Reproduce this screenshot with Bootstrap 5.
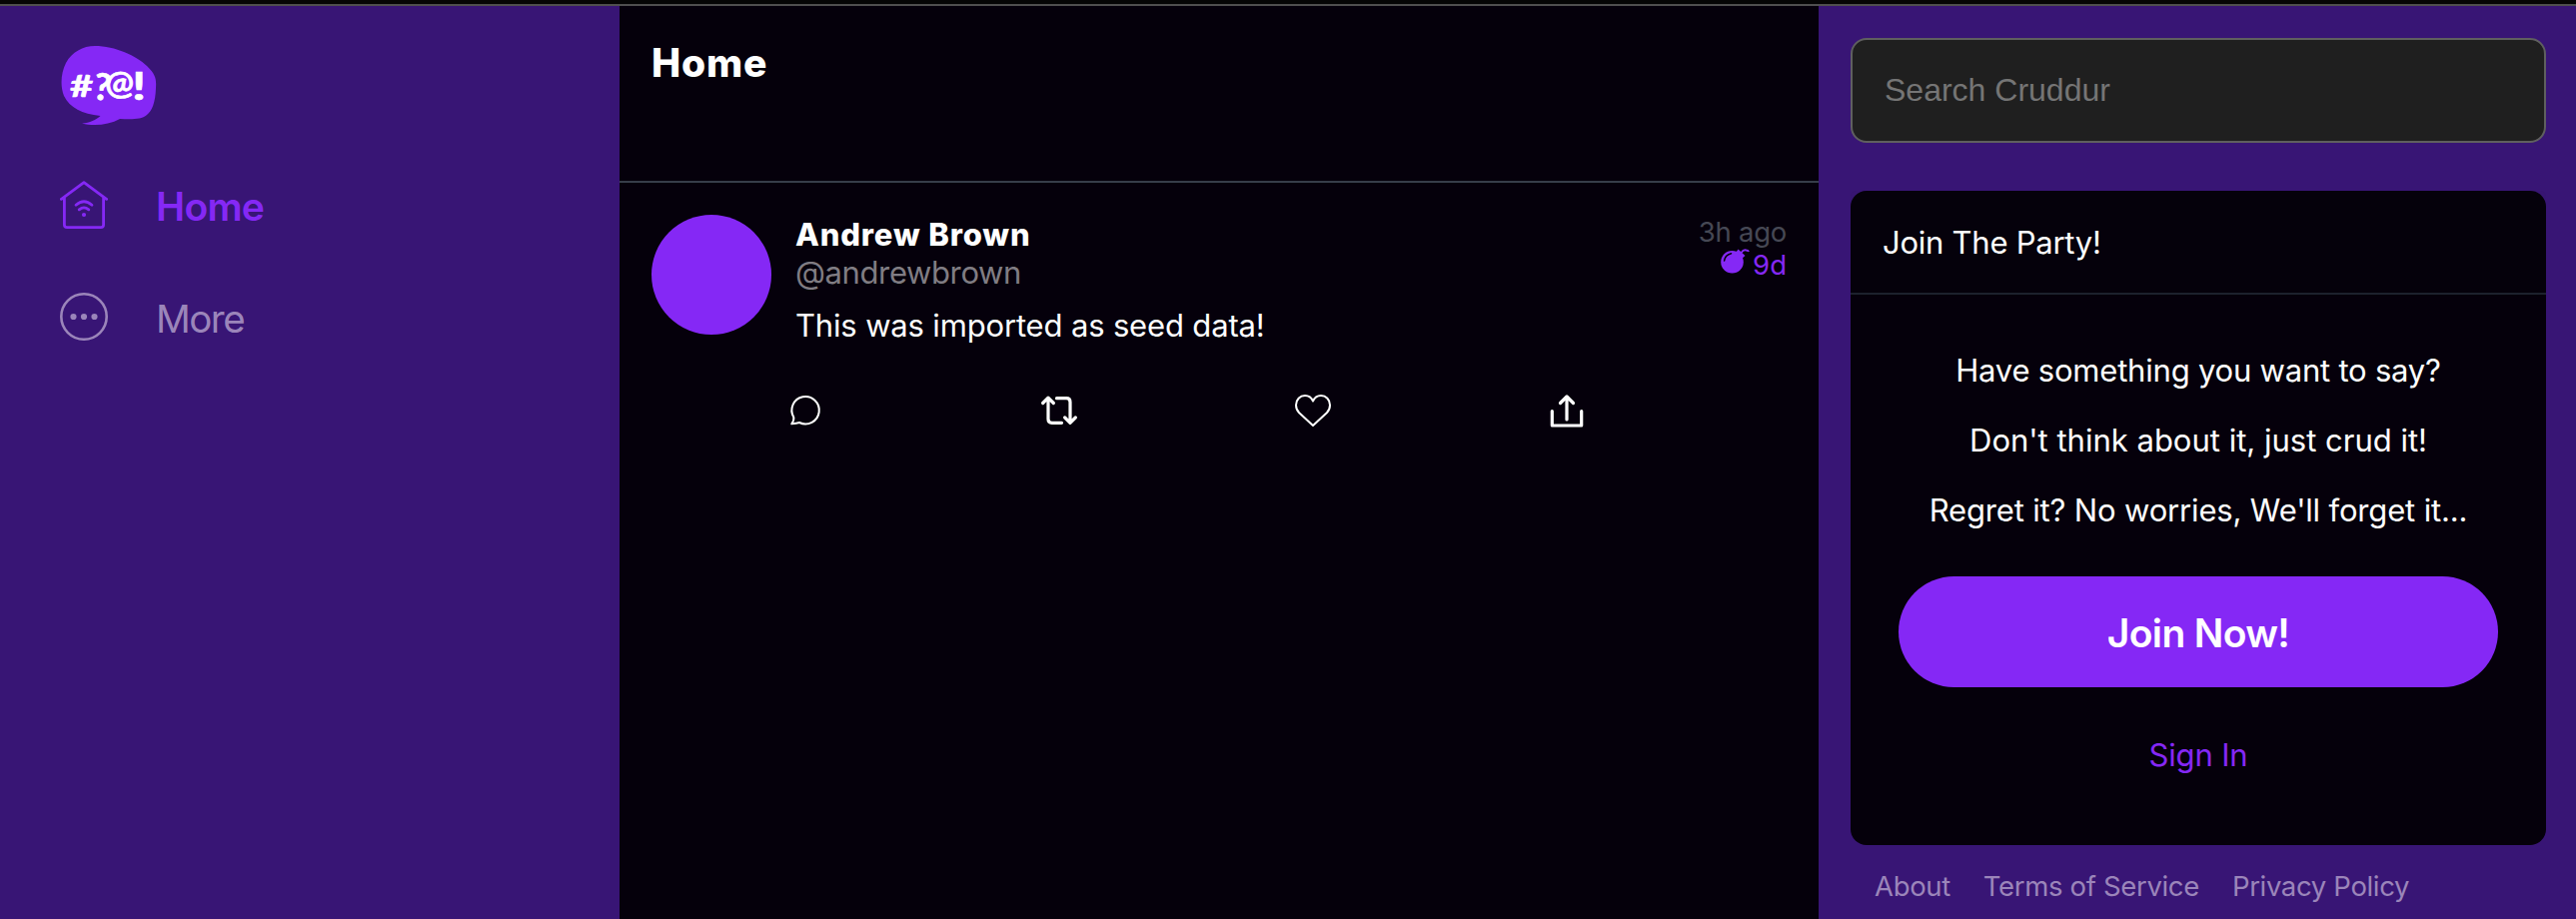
<!DOCTYPE html>
<html lang="en">
<head>
<meta charset="utf-8">
<meta name="viewport" content="width=device-width, initial-scale=1">
<title>Cruddur - Home</title>
<link href="https://cdn.jsdelivr.net/npm/bootstrap@5.3.0/dist/css/bootstrap.min.css" rel="stylesheet">
<style>
:root { --accent: #8528f5; --panel: #381575; --ink: #05000b; --muted: #9b85ba; }
body { background: var(--panel); color: #fff; font-family: Inter, sans-serif; font-size: 31px; line-height: 40px; letter-spacing: -.16px; }
a { color: inherit; text-decoration: none; }
svg { display: block; flex: none; }
.topbar { height: 6px; background: #050505; border-bottom: 2px solid #4f4f4f; }
.sidebar { width: 620px; padding: 40px 60px; }
.brand { width: 96px; height: 80px; margin: 0 0 31px 1px; }
.side-nav { gap: 16px; }
.side-nav .nav-link { height: 96px; padding: 0; gap: 48px; font-size: 38.5px; color: var(--muted); letter-spacing: -1.5px; }
.side-nav .nav-link span { padding-top: 3px; }
.side-nav .nav-link.active { color: var(--accent); font-size: 39px; font-weight: 600; letter-spacing: -.7px; }
.feed { width: 1200px; background: var(--ink); }
.feed-head { height: 177px; padding: 32px; border-bottom: 2px solid #363d49; }
.feed-head h1 { font-size: 39px; line-height: 50px; font-weight: 800; letter-spacing: .8px; margin: 0; }
.post { padding: 32px; }
.avatar { width: 120px; height: 120px; background: var(--accent); flex: none; }
.who { line-height: 38px; padding-top: 1px; }
.who strong { font-weight: 800; letter-spacing: .85px; }
.handle { color: #807d83; letter-spacing: -.38px; }
.when { font-size: 27.5px; line-height: 33px; color: #464854; padding-top: 1px; letter-spacing: -.26px; }
.expires { color: var(--accent); gap: 3px; letter-spacing: 0; }
.message { line-height: 44px; padding-top: 12px; }
.actions { gap: 218px; padding: 45px 0 0 136px; }
.aside-col { padding: 32px 30px 0 32px; }
.search-box { height: 105px; padding: 0 32px; border: 2px solid #5f5f5f; border-radius: 16px; background: #1f1f1f !important; font: 32px "Liberation Sans", sans-serif; letter-spacing: 0; color: #fff; }
.search-box::placeholder { color: #757575; opacity: 1; }
.join { margin-top: 48px; background: var(--ink); border: 0; border-radius: 16px; color: #fff; height: 655px; }
.join .card-header { height: 104px; padding: 32px; border-bottom: 2px solid #1c212d; letter-spacing: -.25px; }
.join .card-body { padding: 56px 48px 0; }
.join p { line-height: 40px; margin: 0 0 30px; }
.join .ask { letter-spacing: -.21px; }
.join .just { letter-spacing: 0; }
.btn-join { height: 111px; margin-top: 46px; padding-top: 2px; background: var(--accent); color: #fff; font-size: 39px; font-weight: 600; letter-spacing: -.65px; }
.sign-in { color: var(--accent); margin-top: 48px; }
.legal { gap: 33px; padding: 21px 24px 0; font-size: 27.5px; letter-spacing: -.34px; color: var(--muted); }
</style>
</head>
<body class="vh-100 overflow-hidden d-flex flex-column">
<div class="topbar flex-shrink-0"></div>
<div class="d-flex flex-grow-1">
  <nav class="sidebar flex-shrink-0">
    <a href="#" class="brand d-block">
      <svg width="96" height="80" viewBox="0 0 96 80">
        <path fill="#8528f5" d="M34 0C54 0 76 10 86 20C95 29 95.500 33 95 42C94.500 57 91 65 86 69C80 74 70 73.500 59 73C48 79 33 80.500 21 77.500C29 77 35 74 39.500 70C21 68 9 62 3 50C-1 40 0 27 5 17C11 6 22 0 34 0Z"/>
        <g fill="#fff" stroke="#fff" stroke-width=".6" font-family="Lato" font-weight="700">
          <text x="9" y="50.500" font-size="30" textLength="23" lengthAdjust="spacingAndGlyphs">#</text>
          <text transform="translate(31.500 53) rotate(7)" font-size="37" textLength="17" lengthAdjust="spacingAndGlyphs">?</text>
          <text transform="translate(45 50) rotate(-5)" font-size="33" textLength="29" lengthAdjust="spacingAndGlyphs">@</text>
          <text x="71" y="54" font-size="39" textLength="14" lengthAdjust="spacingAndGlyphs">!</text>
        </g>
      </svg>
    </a>
    <div class="side-nav nav flex-column">
      <a href="#" class="nav-link active d-flex align-items-center">
        <svg width="48" height="48" viewBox="0 0 48 48" fill="none" stroke="#8528f5" stroke-width="2.800" stroke-linecap="round" stroke-linejoin="round">
          <path d="M1.400 18.300L24 1.600L46.600 18.300M4.400 17V44Q4.400 46.600 7.100 46.600H40.900Q43.600 46.600 43.600 44V17"/>
          <path d="M16 24.200Q24 17.400 32 24.200M19.200 28.800Q24 24.900 28.800 28.800"/>
          <circle cx="24" cy="34" r="2.100" fill="#8528f5" stroke="none"/>
        </svg>
        <span>Home</span>
      </a>
      <a href="#" class="nav-link d-flex align-items-center">
        <svg width="48" height="48" viewBox="0 0 48 48" fill="#9b85ba">
          <circle cx="24" cy="24" r="22.700" fill="none" stroke="#9b85ba" stroke-width="2.600"/>
          <circle cx="13.500" cy="24" r="3.100"/><circle cx="24" cy="24" r="3.100"/><circle cx="34.500" cy="24" r="3.100"/>
        </svg>
        <span>More</span>
      </a>
    </div>
  </nav>

  <main class="feed flex-shrink-0">
    <header class="feed-head"><h1>Home</h1></header>
    <article class="post">
      <div class="d-flex gap-4">
        <div class="avatar rounded-circle"></div>
        <div class="flex-grow-1">
          <div class="d-flex justify-content-between">
            <div class="who d-flex flex-column">
              <strong>Andrew Brown</strong>
              <span class="handle">@andrewbrown</span>
            </div>
            <div class="when d-flex flex-column align-items-end">
              <span>3h ago</span>
              <span class="expires d-flex">
                <svg width="29" height="25" viewBox="0 0 29 25">
                  <circle cx="11.500" cy="13.300" r="11.300" fill="#8528f5"/>
                  <path d="M15 4L17.500 .500L24.500 7L21 10Z" fill="#8528f5"/>
                  <path d="M20.500 4Q23 .500 25.500 1.500Q27.500 1.600 28 3" fill="none" stroke="#8528f5" stroke-width="1.900"/>
                  <path d="M3.600 12Q4.500 6.200 10.500 4.700" fill="none" stroke="#05000b" stroke-width="1.500" stroke-linecap="round"/>
                </svg>
                <span>9d</span>
              </span>
            </div>
          </div>
          <div class="message">This was imported as seed data!</div>
        </div>
      </div>
      <div class="actions d-flex align-items-center">
        <svg width="36" height="36" viewBox="0 0 36 36" fill="none" stroke="#fff" stroke-width="2" stroke-linejoin="round">
          <path d="M6.300 24.700A13.700 13.700 0 1 1 12 30Q9.300 30.700 4.300 31.300Q6.900 27.300 6.300 24.700Z"/>
        </svg>
        <svg width="36" height="36" viewBox="0 0 36 36" fill="none" stroke="#fff" stroke-width="3.200" stroke-linecap="round" stroke-linejoin="round">
          <path d="M1.700 10.500L7 5.200L12.300 10.500M7 6V26.500Q7 30.300 10.800 30.300H20.500M23.700 25L29 30.300L34.300 25M29 29.500V9.500Q29 5.700 25.200 5.700H15.500"/>
        </svg>
        <svg width="36" height="36" viewBox="0 0 36 36" fill="none" stroke="#fff" stroke-width="2" stroke-linejoin="round">
          <path d="M18 33L4.200 20.300C1.500 17.500 1 15 1 12.500C1 7 5 3 10 3C13.500 3 16.500 5 18 8.500C19.500 5 22.500 3 26 3C31 3 35 7 35 12.500C35 15 34.500 17.500 31.800 20.300Z"/>
        </svg>
        <svg width="36" height="36" viewBox="0 0 36 36" fill="none" stroke="#fff" stroke-width="3.200" stroke-linecap="round" stroke-linejoin="round">
          <path d="M3.300 18.500V33H32.700V18.500M18 27V4M11.500 10.500L18 4L24.500 10.500"/>
        </svg>
      </div>
    </article>
  </main>

  <aside class="aside-col flex-grow-1">
    <input type="text" class="search-box form-control" placeholder="Search Cruddur">
    <section class="join card">
      <div class="card-header">Join The Party!</div>
      <div class="card-body text-center d-flex flex-column">
        <p class="ask">Have something you want to say?</p>
        <p class="just">Don't think about it, just crud it!</p>
        <p class="mb-0">Regret it? No worries, We'll forget it...</p>
        <a href="#" class="btn-join rounded-pill d-flex align-items-center justify-content-center">Join Now!</a>
        <a href="#" class="sign-in">Sign In</a>
      </div>
    </section>
    <footer class="legal d-flex">
      <a href="#">About</a>
      <a href="#">Terms of Service</a>
      <a href="#">Privacy Policy</a>
    </footer>
  </aside>
</div>
<script src="https://cdn.jsdelivr.net/npm/bootstrap@5.3.0/dist/js/bootstrap.bundle.min.js"></script>
</body>
</html>
